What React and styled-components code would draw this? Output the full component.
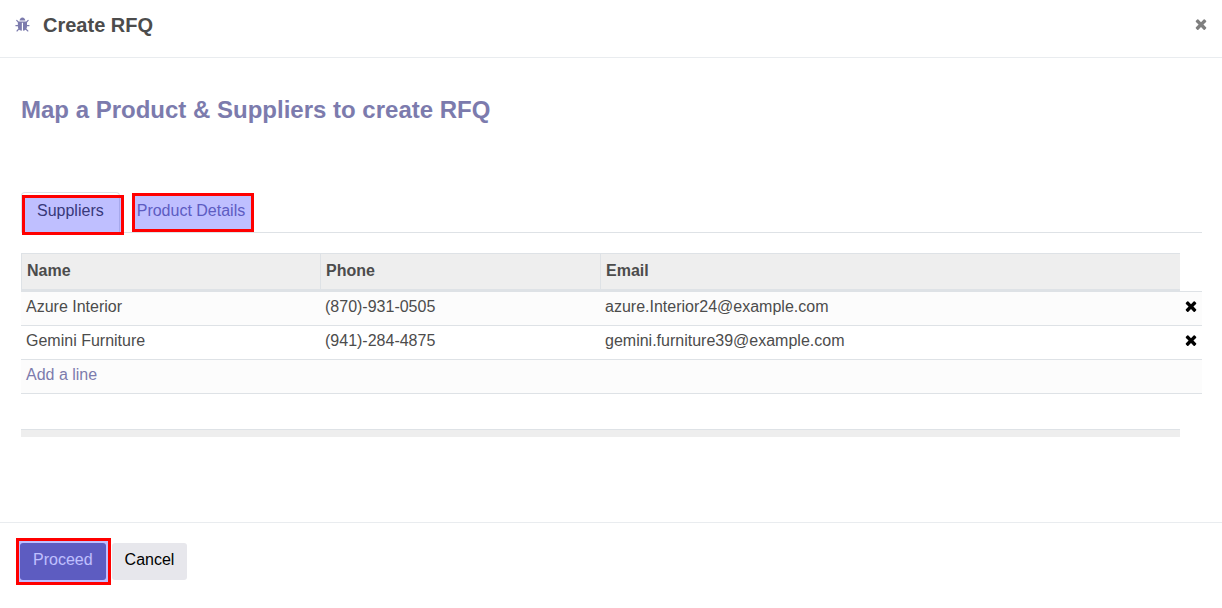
import React, { useState } from "react";
import styled, { createGlobalStyle, css } from "styled-components";

const GlobalStyle = createGlobalStyle`
  *, *::before, *::after { box-sizing: border-box; }
  body {
    margin: 0;
    background: #ffffff;
    color: #4c4c4c;
    font: 16px/24px "Liberation Sans", Arial, sans-serif;
  }
  button { font: inherit; cursor: pointer; }
`;

/* Translucent blue marker with a red frame, laid over a control */
const highlight = css`
  position: relative;
  &::after {
    content: "";
    position: absolute;
    inset: ${(p) => p.$mark};
    border: 3px solid #ff0000;
    background: rgba(0, 0, 255, 0.25);
    background-clip: padding-box;
    pointer-events: none;
  }
`;

const Dialog = styled.div`
  min-height: 100vh;
  display: flex;
  flex-direction: column;
`;

const Header = styled.header`
  display: flex;
  align-items: center;
  gap: 12px;
  padding: 10px 13px 17px 15px;
  border-bottom: 1px solid #e9ecef;
`;

const Title = styled.h1`
  flex: 1;
  margin: 0;
  font-size: 20px;
  line-height: 30px;
`;

const IconButton = styled.button`
  display: flex;
  padding: 0;
  border: 0;
  background: none;
  color: ${(p) => (p.$muted ? "#7f7f7f" : "#000000")};
`;

const CloseButton = styled(IconButton)`
  padding-bottom: 2px;
`;

const Icon = styled.svg`
  display: block;
  width: 16px;
  height: 16px;
  fill: ${(p) => p.$color || "currentColor"};
`;

const Content = styled.main`
  flex: 1;
  padding: 36px 20px 16px 21px;
`;

const Heading = styled.h2`
  margin: 0 0 66px;
  color: #7c7bad;
  font-size: 24px;
  line-height: 32px;
`;

const Tabs = styled.div`
  display: flex;
  gap: 1px;
  border-bottom: 1px solid #dee2e6;
  margin-bottom: 20px;
`;

const Tab = styled.button`
  ${highlight}
  margin-bottom: -1px;
  padding: 6px 15px 9px;
  border: 1px solid ${(p) => (p.$active ? "#dee2e6" : "transparent")};
  border-bottom-color: ${(p) => (p.$active ? "#ffffff" : "transparent")};
  border-radius: 4px 4px 0 0;
  background: none;
  color: ${(p) => (p.$active ? "#4c4c4c" : "#7c7bad")};
`;

const Table = styled.table`
  width: 100%;
  table-layout: fixed;
  border-spacing: 0;
  text-align: left;
`;

const Column = styled.col`
  width: ${(p) => p.$width};
`;

const HeadCell = styled.th`
  height: 39px;
  padding: 0 5px 2px;
  background: #eeeeee;
  border: solid #dee2e6;
  border-width: 1px 0 3px 1px;
`;

const HeadSpacer = styled.td`
  padding: 0;
  border-bottom: 1px solid #dee2e6;
`;

const Row = styled.tr`
  background: ${(p) => (p.$striped ? "#fcfcfc" : "#ffffff")};
`;

const Cell = styled.td`
  padding: 3px 5px 6px;
  border-bottom: 1px solid #dee2e6;
`;

const ActionCell = styled(Cell)`
  padding: 0 0 5px 3px;
`;

const AddLink = styled.a`
  color: #7c7bad;
  text-decoration: none;
`;

const BlankCell = styled.td`
  height: 35px;
  padding: 0;
`;

const FootCell = styled.td`
  height: 8px;
  padding: 0;
  background: #eeeeee;
  border-top: 1px solid #dee2e6;
`;

const Footer = styled.footer`
  display: flex;
  gap: 6px;
  padding: 20px 20px 28px;
  border-top: 1px solid #e9ecef;
`;

const Button = styled.button`
  padding: 5px 13px 8px;
  border: 0;
  border-radius: 3px;
  background: #e7e7ec;
  color: #000000;
`;

const PrimaryButton = styled(Button)`
  ${highlight}
  background: #7c7bad;
  color: #ffffff;
`;

const BugIcon = () => (
  <Icon viewBox="0 0 1792 1792" $color="#7c7bad" aria-hidden="true">
    <path d="M1632 960q0 26-19 45t-45 19h-224q0 171-67 290l208 209q19 19 19 45t-19 45q-18 19-45 19t-45-19l-198-197q-5 5-15 13t-42 28.500-65 36.500-82 29-97 13v-896h-128v896q-51 0-101.500-13.500t-87-33-66-39-43.500-32.500l-15-14-183 207q-20 21-48 21-24 0-43-16-19-18-20.500-44.500t15.500-46.500l202-227q-58-114-58-274h-224q-26 0-45-19t-19-45 19-45 45-19h224v-294l-173-173q-19-19-19-45t19-45 45-19 45 19l173 173h844l173-173q19-19 45-19t45 19 19 45-19 45l-173 173v294h224q26 0 45 19t19 45zm-480-576h-640q0-133 93.500-226.500t226.500-93.500 226.500 93.500 93.500 226.500z" />
  </Icon>
);

const TimesIcon = () => (
  <Icon viewBox="0 0 1792 1792" aria-hidden="true">
    <path d="M1490 1322q0 40-28 68l-136 136q-28 28-68 28t-68-28l-294-294-294 294q-28 28-68 28t-68-28l-136-136q-28-28-28-68t28-68l294-294-294-294q-28-28-28-68t28-68l136-136q28-28 68-28t68 28l294 294 294-294q28-28 68-28t68 28l136 136q28 28 28 68t-28 68l-294 294 294 294q28 28 28 68z" />
  </Icon>
);

const suppliers = [
  { name: "Azure Interior", phone: "(870)-931-0505", email: "azure.Interior24@example.com" },
  { name: "Gemini Furniture", phone: "(941)-284-4875", email: "gemini.furniture39@example.com" },
];

export default function App() {
  const [tab, setTab] = useState("suppliers");

  return (
    <>
      <GlobalStyle />
      <Dialog role="dialog" aria-labelledby="dialog-title">
        <Header>
          <BugIcon />
          <Title id="dialog-title">Create RFQ</Title>
          <CloseButton $muted aria-label="Close">
            <TimesIcon />
          </CloseButton>
        </Header>
        <Content>
          <Heading>Map a Product &amp; Suppliers to create RFQ</Heading>
          <Tabs role="tablist">
            <Tab
              role="tab"
              aria-selected={tab === "suppliers"}
              $active={tab === "suppliers"}
              $mark="2px -5px -3px 0"
              onClick={() => setTab("suppliers")}
            >
              Suppliers
            </Tab>
            <Tab
              role="tab"
              aria-selected={tab === "products"}
              $active={tab === "products"}
              $mark="0 6px 0 10px"
              onClick={() => setTab("products")}
            >
              Product Details
            </Tab>
          </Tabs>
          <Table>
            <colgroup>
              <Column $width="299px" />
              <Column $width="280px" />
              <Column />
              <Column $width="22px" />
            </colgroup>
            <thead>
              <tr>
                <HeadCell scope="col">Name</HeadCell>
                <HeadCell scope="col">Phone</HeadCell>
                <HeadCell scope="col">Email</HeadCell>
                <HeadSpacer />
              </tr>
            </thead>
            <tbody>
              {suppliers.map((s, i) => (
                <Row key={s.name} $striped={i % 2 === 0}>
                  <Cell>{s.name}</Cell>
                  <Cell>{s.phone}</Cell>
                  <Cell>{s.email}</Cell>
                  <ActionCell>
                    <IconButton aria-label={`Remove ${s.name}`}>
                      <TimesIcon />
                    </IconButton>
                  </ActionCell>
                </Row>
              ))}
              <Row $striped>
                <Cell colSpan={4}>
                  <AddLink href="#add">Add a line</AddLink>
                </Cell>
              </Row>
              <tr>
                <BlankCell colSpan={4} />
              </tr>
            </tbody>
            <tfoot>
              <tr>
                <FootCell colSpan={3} />
                <td />
              </tr>
            </tfoot>
          </Table>
        </Content>
        <Footer>
          <PrimaryButton $mark="-5px -5px -5px -4px">Proceed</PrimaryButton>
          <Button>Cancel</Button>
        </Footer>
      </Dialog>
    </>
  );
}
